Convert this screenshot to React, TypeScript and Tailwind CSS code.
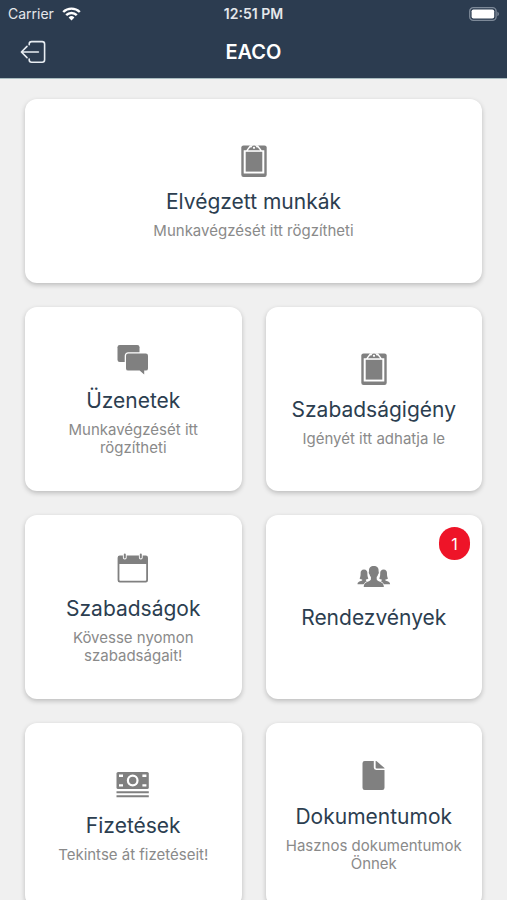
import type { ReactNode } from 'react'

const icons: Record<string, ReactNode> = {
  clipboard: (
    <>
      <rect x="6.3" y="3.4" width="25.4" height="31.6" rx="2.2" />
      <path d="M8.7 8.3h2.6L15 3.2h8l3.7 5.1h2.6v23.3H8.7z" fill="#fff" />
      <path d="M10.7 9.8h16.6v19.8H10.7z" />
      <path d="M12.9 8.3 15.2 5.4h1.2a2.7 2.7 0 0 1 5.2 0h1.2l2.3 2.9z" />
      <circle cx="19" cy="5.8" r="1.1" fill="#fff" />
    </>
  ),
  chat: (
    <>
      <rect x="3.5" y="4" width="22" height="17" rx="2.2" />
      <path
        d="M14.2 12.6h17.6a2.2 2.2 0 0 1 2.2 2.2v12.6a2.2 2.2 0 0 1-2.2 2.2h-1.6v4l-4.6-4H14.2a2.2 2.2 0 0 1-2.2-2.2V14.8a2.2 2.2 0 0 1 2.2-2.2z"
        stroke="#fff"
        strokeWidth="2.6"
        paintOrder="stroke"
      />
    </>
  ),
  calendar: (
    <>
      <path
        fillRule="evenodd"
        d="M5.8 6.6h26a2.2 2.2 0 0 1 2.2 2.2v22.4a2.2 2.2 0 0 1-2.2 2.2h-26a2.2 2.2 0 0 1-2.2-2.2V8.8a2.2 2.2 0 0 1 2.2-2.2zM5.4 15v15.9a.8.8 0 0 0 .8.8h25.2a.8.8 0 0 0 .8-.8V15z"
      />
      <path d="M10.8 5.6v3M26.8 5.6v3" stroke="#fff" strokeWidth="3.8" strokeLinecap="round" />
      <path d="M10.8 5.5v3M26.8 5.5v3" stroke="#808080" strokeWidth="2" strokeLinecap="round" />
    </>
  ),
  people: (
    <>
      <path d="M9 11.6c2.4 0 3.5 1.7 3.4 3.9 0 1.8.1 3.4 1 4.9-.7.7-1.6 1-2.5 1v1.2c.6.6 1.7.8 2.5 1.1-1.8.8-3.4 1.4-4.4 2.5H2.5c.1-3 3.3-2.7 4.7-3.6v-1.2c-1 0-1.9-.3-2.6-1 .9-1.5 1-3.1 1-4.9-.1-2.2 1-3.9 3.4-3.9z" />
      <path d="M28.6 11.6c-2.4 0-3.5 1.7-3.4 3.9 0 1.8-.1 3.4-1 4.9.7.7 1.6 1 2.5 1v1.2c-.6.6-1.7.8-2.5 1.1 1.8.8 3.4 1.4 4.4 2.5h6.5c-.1-3-3.3-2.7-4.7-3.6v-1.2c1 0 1.9-.3 2.6-1-.9-1.5-1-3.1-1-4.9.1-2.2-1-3.9-3.4-3.9z" />
      <path
        d="M18.8 8c3.2 0 5 1.9 4.8 4.9 0 .7.4 1 .2 2-.2.9-.6 1.2-.8 1.5-.2 1.3-.8 2-1.3 2.6v2.5c1 2.6 7 1.4 7.2 7.5H8.7c.2-6.1 6.2-4.9 7.2-7.5V19c-.5-.6-1.1-1.3-1.3-2.6-.2-.3-.6-.6-.8-1.5-.2-1 .2-1.3.2-2-.2-3 1.6-4.9 4.8-4.9z"
        stroke="#fff"
        strokeWidth="1.4"
        paintOrder="stroke"
      />
    </>
  ),
  cash: (
    <>
      <rect x="2.5" y="6" width="32.3" height="17" rx="1.6" />
      <circle cx="18.7" cy="14.5" r="4.8" fill="none" stroke="#fff" strokeWidth="2.2" />
      <path d="M5 8.5h4v2.4H5zM28.4 8.5h4v2.4h-4zM5 18.2h4v2.4H5zM28.4 18.2h4v2.4h-4z" fill="#fff" />
      <path d="M2.5 25.2h32.3v2H2.5zM2.5 29.2h32.3v2H2.5z" />
    </>
  ),
  document: (
    <>
      <path d="M9.7 4h9.1v6.6a2.4 2.4 0 0 0 2.4 2.4h8.3v17.8a2.2 2.2 0 0 1-2.2 2.2H9.7a2.2 2.2 0 0 1-2.2-2.2V6.2A2.2 2.2 0 0 1 9.7 4z" />
      <path d="M20.6 4h.8l8.1 6.9v.6h-7.9a1 1 0 0 1-1-1z" />
    </>
  ),
}

const TILES = [
  { icon: 'clipboard', title: 'Elvégzett munkák', text: 'Munkavégzését itt rögzítheti', wide: true },
  { icon: 'chat', title: 'Üzenetek', text: 'Munkavégzését itt rögzítheti' },
  { icon: 'clipboard', title: 'Szabadságigény', text: 'Igényét itt adhatja le' },
  { icon: 'calendar', title: 'Szabadságok', text: 'Kövesse nyomon szabadságait!' },
  { icon: 'people', title: 'Rendezvények', text: '', badge: 1 },
  { icon: 'cash', title: 'Fizetések', text: 'Tekintse át fizetéseit!' },
  { icon: 'document', title: 'Dokumentumok', text: 'Hasznos dokumentumok Önnek' },
]

function StatusBar() {
  return (
    <div className="grid grid-cols-3 items-center h-7 px-2 text-sm text-gray-200">
      <div className="flex items-center gap-2">
        <span>Carrier</span>
        <svg width="19" height="14" viewBox="0 0 19 14" fill="none" stroke="#fff" strokeWidth="2.4">
          <path d="M1.2 5a11.8 11.8 0 0 1 16.6 0M4.2 8.2a7.5 7.5 0 0 1 10.6 0" />
          <path d="M9.5 13.4 6.6 10.5a4.2 4.2 0 0 1 5.8 0z" fill="#fff" stroke="none" />
        </svg>
      </div>
      <span className="text-center font-semibold whitespace-nowrap">12:51 PM</span>
      <svg className="justify-self-end" width="30" height="14" viewBox="0 0 30 14">
        <rect x=".7" y=".7" width="26.4" height="12.6" rx="3.6" fill="none" stroke="#7d8998" strokeWidth="1.3" />
        <rect x="2.6" y="2.4" width="22.6" height="9.2" rx="1.8" fill="#fff" />
        <path d="M28.4 4.8c2 .7 2 3.7 0 4.4z" fill="#7d8998" />
      </svg>
    </div>
  )
}

function Tile({ icon, title, text, wide, badge }: (typeof TILES)[number]) {
  return (
    <a
      href="#"
      className={`relative flex flex-col items-center justify-center min-h-[184px] px-4 rounded-xl bg-white text-center shadow-[0_2px_5px_rgba(0,0,0,0.22)] ${wide ? 'col-span-2' : ''}`}
    >
      <svg className="mb-2" width="38" height="38" viewBox="0 0 38 38" fill="#808080">
        {icons[icon]}
      </svg>
      <h2 className="text-[21px] leading-7 text-[#2c3e50]">{title}</h2>
      <p className="mt-1.5 min-h-[18px] text-[15px] leading-[18px] text-[#8a8a8a]">{text}</p>
      {badge && (
        <span className="absolute top-3 right-3 flex items-center justify-center w-[31px] h-[33px] rounded-full bg-[#ee1428] text-base text-white">
          {badge}
        </span>
      )}
    </a>
  )
}

export default function App() {
  return (
    <div className="flex flex-col h-screen bg-[#f0f0f0] font-['Inter','Liberation_Sans',sans-serif]">
      <header className="shrink-0 bg-[#2c3c50] border-b border-[#a9bcc0]">
        <StatusBar />
        <div className="grid grid-cols-3 items-center h-[50px] px-5 pb-0.5">
          <button type="button" aria-label="Kijelentkezés" className="justify-self-start">
            <svg width="26" height="24" viewBox="0 0 26 24" fill="none" stroke="#e8edf2" strokeWidth="1.6" strokeLinecap="round" strokeLinejoin="round">
              <path d="M9.2 4.8V4a2.4 2.4 0 0 1 2.4-2.4h10.6A2.4 2.4 0 0 1 24.6 4v15.8a2.4 2.4 0 0 1-2.4 2.4H11.6a2.4 2.4 0 0 1-2.4-2.4V19M18.4 12H1.6M7 6.4 1.4 12 7 17.6" />
            </svg>
          </button>
          <h1 className="text-xl font-semibold text-center text-white">EACO</h1>
        </div>
      </header>
      <main className="flex-1 overflow-y-auto [scrollbar-width:none]">
        <div className="grid grid-cols-2 gap-6 px-[25px] py-5">
          {TILES.map((tile) => (
            <Tile key={tile.title} {...tile} />
          ))}
        </div>
      </main>
    </div>
  )
}
